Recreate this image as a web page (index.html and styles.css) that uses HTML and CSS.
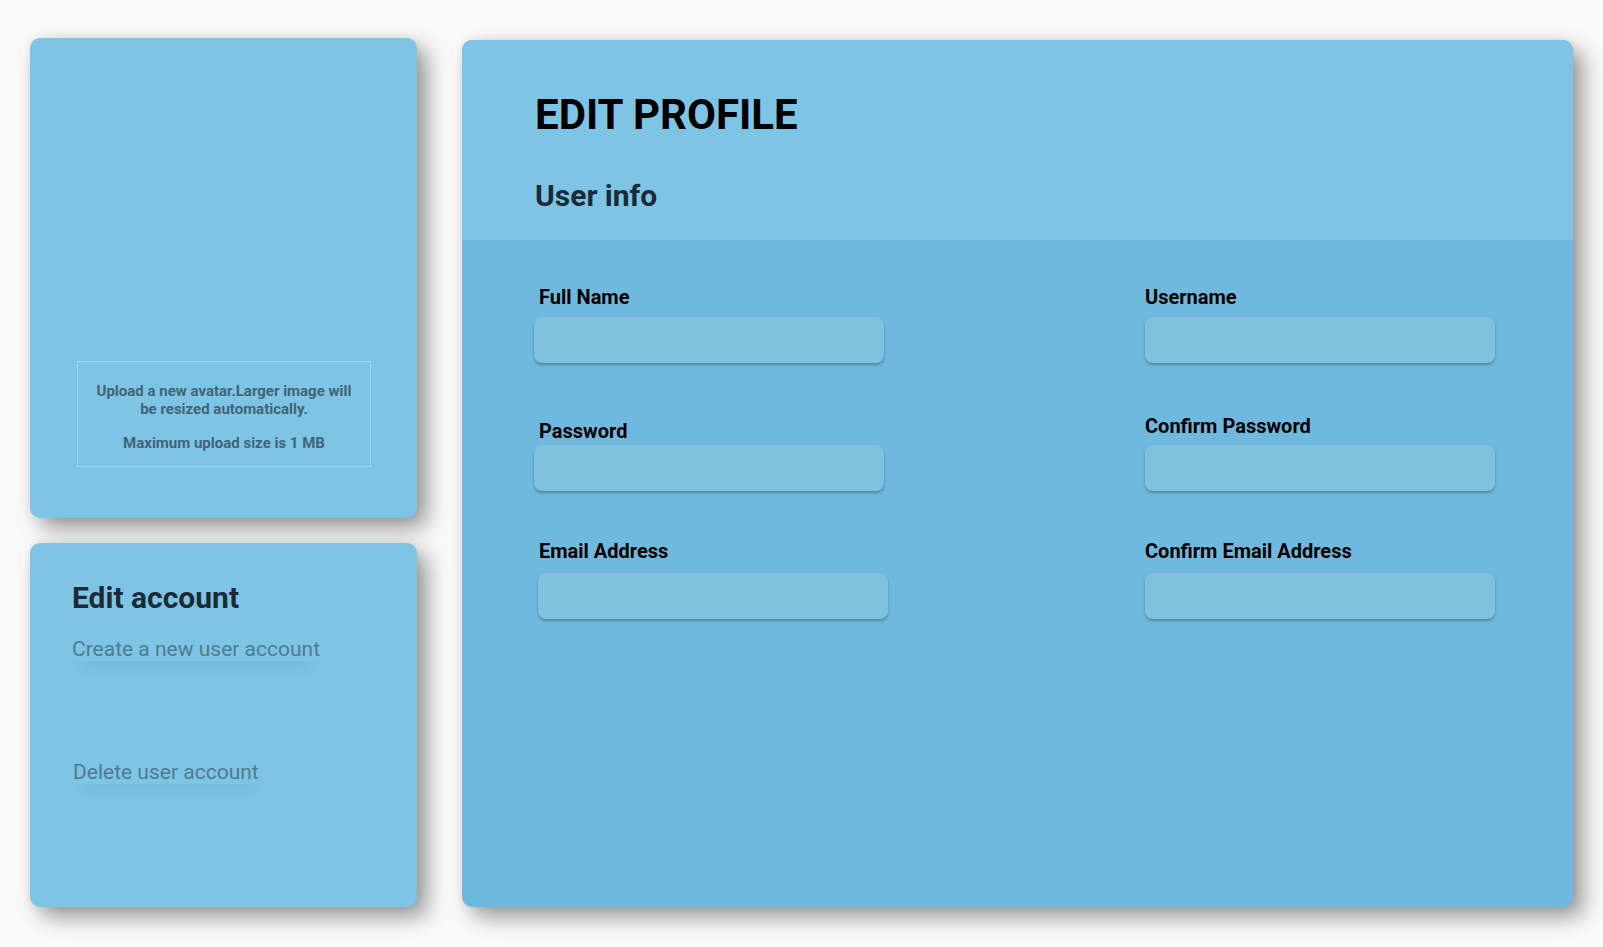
FILE: index.html
```html
<!DOCTYPE html>
<html lang="en">
<head>
<meta charset="utf-8">
<title>Edit Profile</title>
<link rel="stylesheet" href="styles.css">
</head>
<body>
<div class="page">
  <aside class="side">
    <section class="card avatar-card">
      <div class="upload-box">
        <p>Upload a new avatar.Larger image will be resized automatically.</p>
        <p class="upload-max">Maximum upload size is 1 MB</p>
      </div>
    </section>
    <section class="card account-card">
      <h2 class="account-title">Edit account</h2>
      <a class="account-link link-create" href="#">Create a new user account</a>
      <a class="account-link link-delete" href="#">Delete user account</a>
    </section>
  </aside>
  <main class="main-card">
    <header class="main-header">
      <h1 class="main-title">EDIT PROFILE</h1>
      <h2 class="section-title">User info</h2>
    </header>
    <form class="form">
      <div class="form-col form-col-left">
        <div class="field field-fullname">
          <label class="field-label">Full Name</label>
          <input class="field-input" type="text">
        </div>
        <div class="field field-password">
          <label class="field-label">Password</label>
          <input class="field-input" type="password">
        </div>
        <div class="field field-email">
          <label class="field-label">Email Address</label>
          <input class="field-input" type="text">
        </div>
      </div>
      <div class="form-col form-col-right">
        <div class="field field-username">
          <label class="field-label">Username</label>
          <input class="field-input" type="text">
        </div>
        <div class="field field-confirm-password">
          <label class="field-label">Confirm Password</label>
          <input class="field-input" type="password">
        </div>
        <div class="field field-confirm-email">
          <label class="field-label">Confirm Email Address</label>
          <input class="field-input" type="text">
        </div>
      </div>
    </form>
  </main>
</div>
</body>
</html>
```

FILE: styles.css
```css
* {
  box-sizing: border-box;
}

html, body {
  margin: 0;
  padding: 0;
  background: #fafafa;
}

body {
  font-family: Roboto, "Liberation Sans", Arial, sans-serif;
  color: #000;
  min-height: 100vh;
}

.page {
  display: flex;
  align-items: flex-start;
  padding: 38px 30px 40px 30px;
  gap: 45px;
  min-height: 100vh;
}

.side {
  width: 387px;
  display: flex;
  flex-direction: column;
  gap: 25px;
  flex-shrink: 0;
}

.card {
  background: #7ec4e5;
  border-radius: 10px;
  box-shadow: 10px 10px 22px rgba(0, 0, 0, 0.4), 0 0 10px rgba(0, 0, 0, 0.07);
}

.avatar-card {
  height: 480px;
  display: flex;
  flex-direction: column;
  justify-content: flex-end;
  padding: 0 46px 51px 47px;
}

.upload-box {
  border: 1px solid #8fdcf4;
  height: 106px;
  padding: 20px 12px 0;
  text-align: center;
  font-size: 15px;
  line-height: 18px;
  font-weight: 700;
  color: #3f6577;
}

.upload-box p {
  margin: 0;
}

.upload-box .upload-max {
  margin-top: 16px;
}

.account-card {
  height: 364px;
  padding: 37px 42px;
  display: flex;
  flex-direction: column;
  align-items: flex-start;
}

.account-title {
  margin: 0;
  font-size: 30px;
  line-height: 35px;
  font-weight: 700;
  color: #1b2b35;
}

.account-link {
  display: inline-block;
  font-size: 21px;
  line-height: 24px;
  color: #4f7b90;
  text-decoration: none;
  box-shadow: 0 12px 16px -8px rgba(0, 0, 0, 0.1);
}

.link-create {
  margin-top: 22px;
}

.link-delete {
  margin-top: 99px;
  margin-left: 1px;
}

.main-card {
  margin-top: 2px;
  width: 1111px;
  height: 867px;
  background: #70b9de;
  border-radius: 10px;
  overflow: hidden;
  box-shadow: 10px 10px 22px rgba(0, 0, 0, 0.4), 0 0 10px rgba(0, 0, 0, 0.07);
  flex-shrink: 0;
}

.main-header {
  background: #7ec4e5;
  height: 200px;
  padding: 50px 0 0 73px;
}

.main-title {
  margin: 0;
  font-size: 42px;
  line-height: 49px;
  font-weight: 700;
  color: #000;
}

.section-title {
  margin: 39px 0 0;
  font-size: 30px;
  line-height: 35px;
  font-weight: 700;
  color: #1b2b35;
}

.form {
  display: flex;
  justify-content: space-between;
  padding: 46px 78px 0 72px;
}

.form-col {
  width: 350px;
  display: flex;
  flex-direction: column;
}

.field {
  display: flex;
  flex-direction: column;
  align-items: flex-start;
}

.field-label {
  font-size: 20px;
  line-height: 23px;
  font-weight: 700;
  color: #000;
}

.form-col-left .field-label {
  margin-left: 5px;
}

.field-input {
  width: 350px;
  height: 46px;
  border: none;
  border-radius: 8px;
  background: #80c1de;
  box-shadow: 0 2px 3px rgba(0, 0, 0, 0.28);
  outline: none;
  font: inherit;
  padding: 0 12px;
}

.field-fullname .field-label,
.field-username .field-label {
  margin-bottom: 8px;
}

.field-password {
  margin-top: 57px;
}

.field-password .field-label {
  margin-bottom: 2px;
}

.field-confirm-password {
  margin-top: 52px;
}

.field-confirm-password .field-label {
  margin-bottom: 7px;
}

.field-email,
.field-confirm-email {
  margin-top: 49px;
}

.field-email .field-label,
.field-confirm-email .field-label {
  margin-bottom: 10px;
}

.field-email .field-input {
  margin-left: 4px;
}
```
